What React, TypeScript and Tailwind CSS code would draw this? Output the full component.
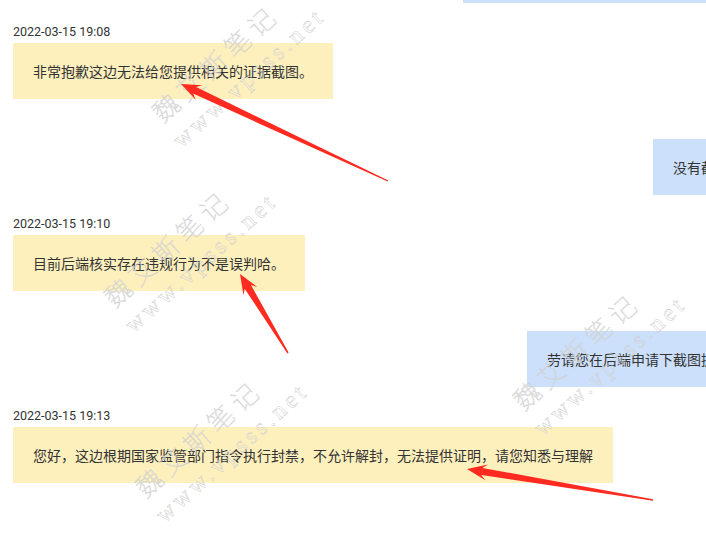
import React from "react";

function arrowPoints(tx: number, ty: number, ex: number, ey: number): string {
  const dx = ex - tx;
  const dy = ey - ty;
  const L = Math.sqrt(dx * dx + dy * dy);
  const ux = dx / L;
  const uy = dy / L;
  const nx = -uy;
  const ny = ux;
  const hl = 20, hw = 8, nl = 15, sw = 3.6, tw = 0.7;
  const p = (a: number, b: number) => `${(tx + a * ux + b * nx).toFixed(1)},${(ty + a * uy + b * ny).toFixed(1)}`;
  return [
    p(0, 0),
    p(hl, hw),
    p(nl, sw),
    p(L, tw),
    p(L, -tw),
    p(nl, -sw),
    p(hl, -hw),
  ].join(" ");
}

function Time({ children }: { children: React.ReactNode }) {
  return (
    <div className="mt-[21px] ml-[13px] h-[16px] leading-[16px] font-['Roboto',sans-serif] text-[12.5px] text-[#333]">
      {children}
    </div>
  );
}

function Yellow({ children }: { children: React.ReactNode }) {
  return (
    <div className="flex ml-[13px] mt-[3px]">
      <div className="bg-[#fef0bd] px-5 h-[56px] flex items-center whitespace-nowrap">{children}</div>
    </div>
  );
}

function Blue({ children, ml }: { children: React.ReactNode; ml: string }) {
  return (
    <div className={`flex mt-[40px] ${ml}`}>
      <div className="bg-[#cce0fb] px-5 h-[56px] flex items-center whitespace-nowrap shrink-0">{children}</div>
    </div>
  );
}

function Watermark({ pos }: { pos: string }) {
  return (
    <div
      className={`absolute ${pos} origin-top-left rotate-[-42deg] text-transparent [-webkit-text-stroke:0.5px_#d0d0d0] leading-[34px] whitespace-nowrap`}
    >
      <div className="pl-[3px] text-[26px] font-thin tracking-[6px] font-['Noto_Sans_CJK_SC',sans-serif]">魏艾斯笔记</div>
      <div className="text-[24px] tracking-[4px] font-['Liberation_Serif',serif]">www.vpsss.net</div>
    </div>
  );
}

export default function App() {
  return (
    <div className="relative w-[706px] h-[533px] overflow-hidden bg-white font-['Noto_Sans_CJK_SC',sans-serif] text-[14px] text-[#333]">
      <div className="ml-[463px] h-[3px] bg-[#cce0fb]" />
      <Time>2022-03-15 19:08</Time>
      <Yellow>非常抱歉这边无法给您提供相关的证据截图。</Yellow>
      <Blue ml="ml-[653px]">没有截图吗？</Blue>
      <Time>2022-03-15 19:10</Time>
      <Yellow>目前后端核实存在违规行为不是误判哈。</Yellow>
      <Blue ml="ml-[527px]">劳请您在后端申请下截图提供一下</Blue>
      <Time>2022-03-15 19:13</Time>
      <Yellow>您好，这边根期国家监管部门指令执行封禁，不允许解封，无法提供证明，请您知悉与理解</Yellow>

      <div className="absolute inset-0 pointer-events-none">
        <Watermark pos="left-[142px] top-[105px]" />
        <Watermark pos="left-[94px] top-[290px]" />
        <Watermark pos="left-[503px] top-[393px]" />
        <Watermark pos="left-[125px] top-[480px]" />
      </div>

      <svg className="absolute inset-0 pointer-events-none" width="706" height="533" viewBox="0 0 706 533">
        <polygon points={arrowPoints(181, 84, 388, 181)} fill="#ff2a20" />
        <polygon points={arrowPoints(240, 274, 288, 353)} fill="#ff2a20" />
        <polygon points={arrowPoints(467, 469, 653, 500)} fill="#ff2a20" />
      </svg>
    </div>
  );
}
